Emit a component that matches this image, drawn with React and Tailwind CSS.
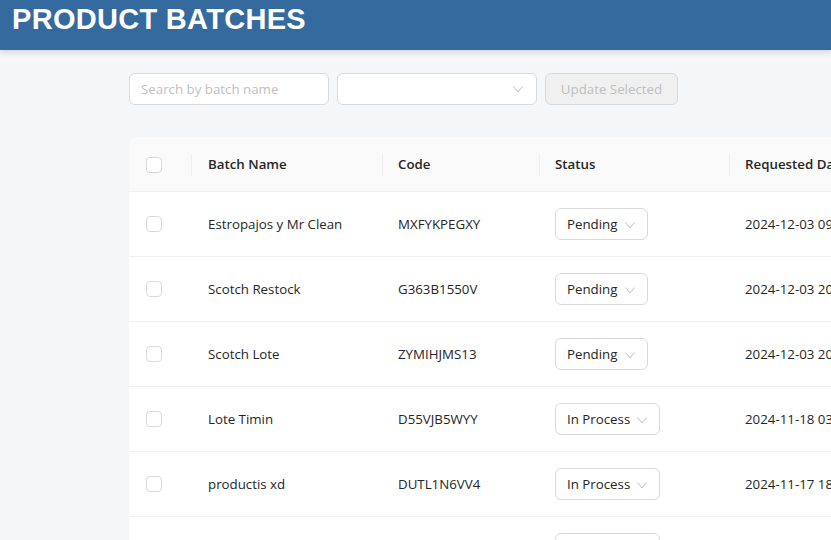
import React from "react";

const rows = [
  { name: "Estropajos y Mr Clean", code: "MXFYKPEGXY", status: "Pending", date: "2024-12-03 09:14" },
  { name: "Scotch Restock", code: "G363B1550V", status: "Pending", date: "2024-12-03 20:11" },
  { name: "Scotch Lote", code: "ZYMIHJMS13", status: "Pending", date: "2024-12-03 20:05" },
  { name: "Lote Timin", code: "D55VJB5WYY", status: "In Process", date: "2024-11-18 03:22" },
  { name: "productis xd", code: "DUTL1N6VV4", status: "In Process", date: "2024-11-17 18:40" },
  { name: "Lote Nuevo", code: "K8H2N4PQ7R", status: "In Process", date: "2024-11-16 12:30" },
];

const Chevron = ({ className }) => (
  <svg className={className} width="12" height="12" viewBox="0 0 12 12" fill="none">
    <path d="M1.5 3.5 L6 9 L10.5 3.5" stroke="currentColor" strokeWidth="1" />
  </svg>
);

const Box = () => (
  <div className="w-4 h-4 rounded-[4px] border border-[#d9d9d9] bg-white" />
);

const Sep = () => <div className="absolute left-0 top-1/2 -translate-y-1/2 w-px h-[22px] bg-[#f0f0f0]" />;

export default function App() {
  const font = { fontFamily: '"Open Sans", "Noto Sans", sans-serif' };
  return (
    <div className="w-[831px] h-[540px] overflow-hidden bg-[#f5f6f8]" style={font}>
      <div className="relative z-10 h-[50px] bg-[#356a9e] shadow-[0_2px_6px_rgba(0,0,0,0.15)] px-[12px] pt-[1px]">
        <h1
          className="text-white font-bold text-[29px] leading-[36px] tracking-[0.3px]"
          style={{ fontFamily: '"Liberation Sans", Arial, sans-serif' }}
        >
          PRODUCT BATCHES
        </h1>
      </div>
      <div className="pl-[129px] pt-[23px]">
        <div className="flex gap-[8px] text-[13.3px]">
          <div className="w-[200px] h-[32px] pt-[2px] rounded-[6px] border border-[#d9d9d9] bg-white flex items-center px-[11px] text-[#bfbfbf]">
            Search by batch name
          </div>
          <div className="w-[200px] h-[32px] rounded-[6px] border border-[#d9d9d9] bg-white flex items-center justify-end px-[12px] text-[#bfbfbf]">
            <Chevron className="text-[#bfbfbf]" />
          </div>
          <div className="w-[133px] h-[32px] pt-[2px] rounded-[6px] border border-[#d9d9d9] bg-[#f0f0f0] flex items-center justify-center text-[#bfbfbf]">
            Update Selected
          </div>
        </div>
        <div className="mt-[32px] w-[900px] text-[13.3px] text-[#262626] rounded-tl-[8px] overflow-hidden">
          <div className="flex h-[55px] pt-[2px] bg-[#fafafa] border-b border-[#f0f0f0] items-center font-semibold">
            <div className="w-[62px] pl-[17px]"><Box /></div>
            <div className="relative w-[191px] pl-[17px] h-full flex items-center"><Sep />Batch Name</div>
            <div className="relative w-[157px] pl-[16px] h-full flex items-center"><Sep />Code</div>
            <div className="relative w-[190px] pl-[16px] h-full flex items-center"><Sep />Status</div>
            <div className="relative flex-1 pl-[16px] h-full flex items-center whitespace-nowrap"><Sep />Requested Date</div>
          </div>
          {rows.map((r) => (
            <div key={r.code} className="flex h-[65px] bg-white border-b border-[#f0f0f0] items-center">
              <div className="w-[62px] pl-[17px]"><Box /></div>
              <div className="w-[191px] pl-[17px] pt-[2px]">{r.name}</div>
              <div className="w-[157px] pl-[16px] pt-[2px]">{r.code}</div>
              <div className="w-[190px] pl-[16px]">
                <div className="inline-flex h-[32px] pt-[2px] items-center gap-[6px] px-[11px] rounded-[6px] border border-[#d9d9d9] bg-white">
                  <span>{r.status}</span>
                  <Chevron className="text-[#bfbfbf]" />
                </div>
              </div>
              <div className="flex-1 pl-[16px] pt-[2px] whitespace-nowrap">{r.date}</div>
            </div>
          ))}
        </div>
      </div>
    </div>
  );
}
